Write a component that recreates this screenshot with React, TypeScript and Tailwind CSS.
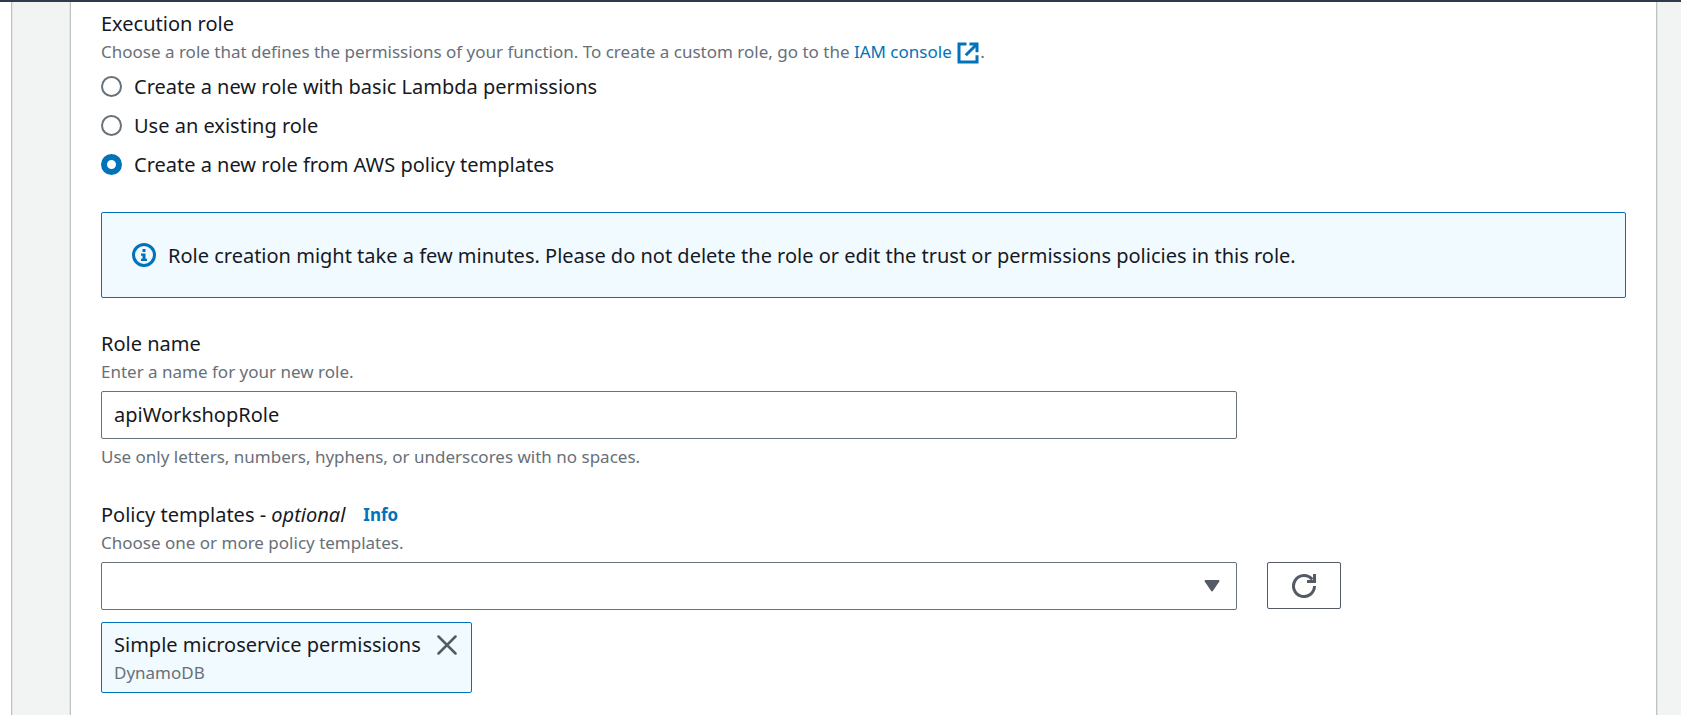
import { useState } from 'react';

const ROLE_OPTIONS = [
  { id: 'basic', label: 'Create a new role with basic Lambda permissions' },
  { id: 'existing', label: 'Use an existing role' },
  { id: 'template', label: 'Create a new role from AWS policy templates' },
];

function ExternalIcon() {
  return (
    <svg viewBox="0 0 16 16" className="-my-1 inline-block h-6 w-6 align-middle" fill="none" stroke="currentColor" strokeWidth="2" aria-hidden="true">
      <path d="M7 2H2v12h12V9.500" />
      <path d="M9 2h5v5.500" />
      <path d="M6.500 9.500 14 2" />
    </svg>
  );
}

function InfoIcon() {
  return (
    <svg viewBox="0 0 16 16" className="h-6 w-6 shrink-0 text-[#0073bb]" fill="none" stroke="currentColor" aria-hidden="true">
      <circle cx="8" cy="8" r="7" strokeWidth="2" />
      <path d="M7 4h2v2H7zM6 7h3v3.500h1V12H6v-1.500h1v-2H6z" fill="currentColor" stroke="none" />
    </svg>
  );
}

function RefreshIcon() {
  return (
    <svg viewBox="0 0 16 16" className="h-6 w-6" fill="none" stroke="currentColor" strokeWidth="2" aria-hidden="true">
      <path d="M15 8a7 7 0 1 1-1.500-4.300" />
      <path d="M10 5h5V0" />
    </svg>
  );
}

function CloseIcon() {
  return (
    <svg viewBox="0 0 20 20" className="h-5 w-5" fill="none" stroke="currentColor" strokeWidth="2.500" strokeLinecap="round" aria-hidden="true">
      <path d="M1.500 1.500l17 17M18.500 1.500l-17 17" />
    </svg>
  );
}

export default function App() {
  const [role, setRole] = useState('template');
  const [name, setName] = useState('apiWorkshopRole');

  return (
    <div className="flex min-h-screen flex-col border-t-2 border-[#2f3a4a] bg-white font-['Noto_Sans',sans-serif] text-[20px] leading-[33px] text-[#16191f]">
      <div className="ml-[11px] flex grow flex-col border-l border-[#bcc4c5] bg-[#f2f3f3] pr-6 pl-[58px] shadow-[inset_1px_0_0_#e3e7e7]">
        <main className="grow border-x border-[#bcc4c5] bg-white px-[30px] pt-[5px] pb-[22px] shadow-[1px_0_0_#dfe3e3,-1px_0_0_#e3e7e7]">
          <fieldset>
            <legend>Execution role</legend>
            <p className="text-[17px] leading-6 text-[#687078]">
              Choose a role that defines the permissions of your function. To create a custom role, go to the{' '}
              <a href="#iam" className="text-[#0073bb]">
                IAM console <ExternalIcon />
              </a>
              .
            </p>
            <div className="mt-[6px] flex flex-col gap-[6px]">
              {ROLE_OPTIONS.map((option) => (
                <label key={option.id} className="flex items-center gap-3 self-start">
                  <input
                    type="radio"
                    name="execution-role"
                    checked={role === option.id}
                    onChange={() => setRole(option.id)}
                    className="h-[21px] w-[21px] appearance-none rounded-full border-2 border-[#687078] bg-white checked:border-[6px] checked:border-[#0073bb]"
                  />
                  {option.label}
                </label>
              ))}
            </div>
          </fieldset>

          <div role="status" className="mt-[31px] flex min-h-[86px] items-center gap-3 rounded-[2px] border border-[#0073bb] bg-[#f1faff] px-[30px] py-3">
            <InfoIcon />
            <p>Role creation might take a few minutes. Please do not delete the role or edit the trust or permissions policies in this role.</p>
          </div>

          <div className="mt-[29px] grid grid-cols-12 gap-x-[30px]">
            <div className="col-span-9">
              <label htmlFor="role-name" className="block">Role name</label>
              <p className="text-[17px] leading-6 text-[#687078]">Enter a name for your new role.</p>
              <input
                id="role-name"
                type="text"
                value={name}
                onChange={(event) => setName(event.target.value)}
                className="mt-[7px] block h-12 w-full rounded-[2px] border border-[#687078] bg-white px-3 pb-[2px]"
              />
              <p className="mt-[6px] text-[17px] leading-6 text-[#687078]">Use only letters, numbers, hyphens, or underscores with no spaces.</p>
            </div>
          </div>

          <div className="mt-[29px] flex items-center gap-[18px]">
            <label htmlFor="policy-templates">
              Policy templates - <i>optional</i>
            </label>
            <a href="#info" className="text-[17px] font-bold text-[#0073bb]">Info</a>
          </div>
          <p className="text-[17px] leading-6 text-[#687078]">Choose one or more policy templates.</p>
          <div className="mt-[7px] grid grid-cols-12 items-start gap-x-[30px]">
            <div className="col-span-9 grid items-center">
              <select
                id="policy-templates"
                defaultValue=""
                className="col-start-1 row-start-1 h-12 w-full appearance-none rounded-[2px] border border-[#687078] bg-white px-3"
              >
                <option value="" />
                <option value="microservice">Simple microservice permissions</option>
              </select>
              <svg viewBox="0 0 16 12" className="pointer-events-none col-start-1 row-start-1 mr-[17px] h-3 w-4 justify-self-end text-[#545b64]" fill="currentColor" stroke="currentColor" strokeWidth="2" strokeLinejoin="round" aria-hidden="true">
                <path d="M1.500 1h13L8 10.500z" />
              </svg>
            </div>
            <div className="col-span-3">
              <button type="button" aria-label="Refresh" className="flex h-[47px] w-[74px] items-center justify-center rounded-[2px] border border-[#545b64] bg-white text-[#545b64]">
                <RefreshIcon />
              </button>
            </div>
          </div>

          <div className="mt-3 flex w-fit items-start gap-4 rounded-[2px] border border-[#0073bb] bg-[#f1faff] pt-[5px] pr-[14px] pb-[7px] pl-3">
            <div>
              <p>Simple microservice permissions</p>
              <p className="text-[17px] leading-6 text-[#687078]">DynamoDB</p>
            </div>
            <button type="button" aria-label="Remove Simple microservice permissions" className="flex h-[33px] items-center text-[#545b64]">
              <CloseIcon />
            </button>
          </div>
        </main>
      </div>
    </div>
  );
}
